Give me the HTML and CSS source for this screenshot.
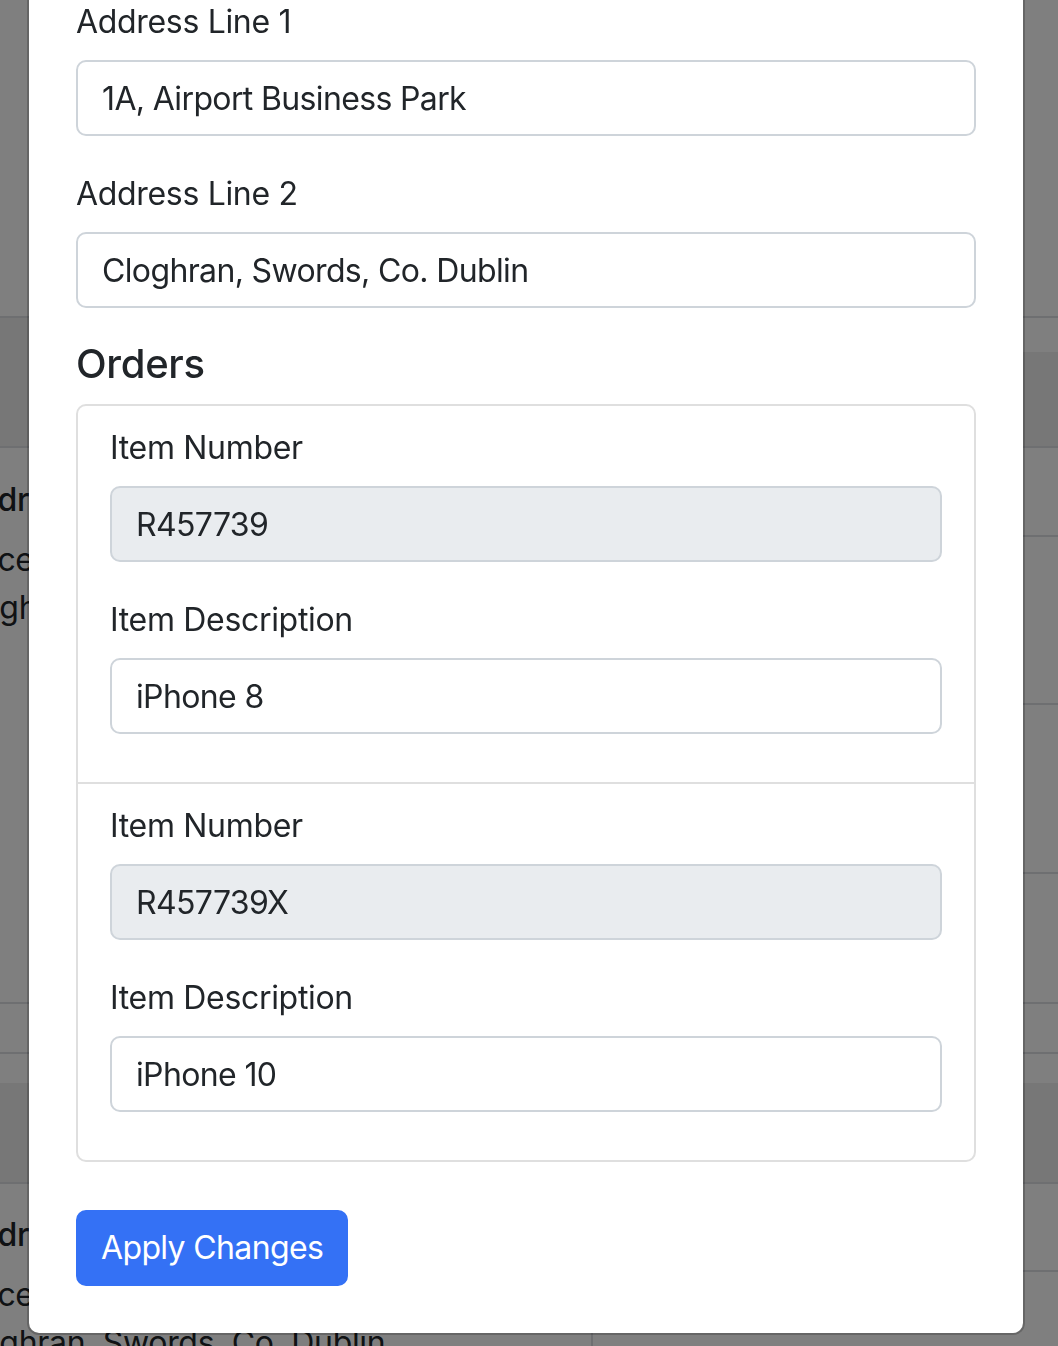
FILE: index.html
```html
<!DOCTYPE html>
<html lang="en">
<head>
<meta charset="utf-8">
<title>Edit Customer</title>
<link rel="stylesheet" href="styles.css">
</head>
<body>
<div class="page">
  <div class="row row-a"><div class="cell"></div><div class="cell cell-r"></div></div>
  <div class="row row-b">
    <div class="cell band"></div>
    <div class="cell cell-r"><div class="sub sub-b1"></div><div class="sub sub-b2 band"></div></div>
  </div>
  <div class="row row-c">
    <div class="cell text-cell">
      <div class="t-line t-head t-address">Address</div>
      <div class="t-line t-office">Office 1A, Airport Business Park</div>
      <div class="t-line t-town">Cloghran, Swords, Co. Dublin</div>
    </div>
    <div class="cell cell-r">
      <div class="sub sub-c1"></div>
      <div class="sub sub-c2"></div>
      <div class="sub sub-c3"></div>
      <div class="sub sub-c4"></div>
    </div>
  </div>
  <div class="row row-d"><div class="cell"></div><div class="cell cell-r"></div></div>
  <div class="row row-e">
    <div class="cell"><div class="sub sub-e1"></div><div class="sub sub-e2 band"></div></div>
    <div class="cell cell-r"><div class="sub sub-e1"></div><div class="sub sub-e2 band"></div></div>
  </div>
  <div class="row row-f">
    <div class="cell text-cell text-cell-f">
      <div class="t-line t-head t-address">Address</div>
      <div class="t-line t-office">Office 1A, Airport Business Park</div>
      <div class="t-line t-town">Cloghran, Swords, Co. Dublin</div>
    </div>
    <div class="cell cell-r"><div class="sub sub-f1"></div></div>
  </div>
</div>

<div class="backdrop"></div>

<div class="modal-wrap">
  <div class="modal">
    <div class="field">
      <label class="label" for="a1">Address Line 1</label>
      <input class="input" id="a1" type="text" value="1A, Airport Business Park">
    </div>
    <div class="field">
      <label class="label" for="a2">Address Line 2</label>
      <input class="input" id="a2" type="text" value="Cloghran, Swords, Co. Dublin">
    </div>
    <h4 class="section-title">Orders</h4>
    <ul class="orders">
      <li class="order">
        <div class="field">
          <label class="label" for="n1">Item Number</label>
          <input class="input input-readonly" id="n1" type="text" value="R457739" readonly>
        </div>
        <div class="field">
          <label class="label" for="d1">Item Description</label>
          <input class="input" id="d1" type="text" value="iPhone 8">
        </div>
      </li>
      <li class="order">
        <div class="field">
          <label class="label" for="n2">Item Number</label>
          <input class="input input-readonly" id="n2" type="text" value="R457739X" readonly>
        </div>
        <div class="field">
          <label class="label" for="d2">Item Description</label>
          <input class="input" id="d2" type="text" value="iPhone 10">
        </div>
      </li>
    </ul>
    <button class="btn-primary" type="button">Apply Changes</button>
  </div>
</div>
</body>
</html>
```

FILE: styles.css
```css
* {
  box-sizing: border-box;
}

html, body {
  margin: 0;
  padding: 0;
  height: 1346px;
  overflow: hidden;
}

body {
  font-family: Inter, "Liberation Sans", sans-serif;
  letter-spacing: -0.02em;
  color: #212529;
  background: #ffffff;
}

/* ---------- background page (under the backdrop) ---------- */
.page {
  width: 1058px;
}

.row {
  display: grid;
  grid-template-columns: 591px 1fr;
  border-bottom: 2px solid #dcdfe3;
}

.cell {
  display: flex;
  flex-direction: column;
}

.cell-r {
  border-left: 2px solid #dcdfe3;
}

.band {
  background: #eeeeee;
}

.row-a { height: 318px; }
.row-b { height: 130px; }
.sub-b1 { height: 34px; }
.sub-b2 { flex: 1; }

.row-c { height: 556px; }
.sub-c1 { height: 89px; border-bottom: 2px solid #dcdfe3; }
.sub-c2 { height: 168px; border-bottom: 2px solid #dcdfe3; }
.sub-c3 { height: 169px; border-bottom: 2px solid #dcdfe3; }
.sub-c4 { flex: 1; }

.row-d { height: 50px; }
.row-e { height: 130px; }
.sub-e1 { height: 29px; }
.sub-e2 { flex: 1; }

.row-f { height: 200px; border-bottom: 0; }
.sub-f1 { height: 88px; border-bottom: 2px solid #dcdfe3; }

.text-cell {
  padding-top: 28px;
  font-size: 32px;
  line-height: 48px;
  white-space: nowrap;
  overflow: hidden;
}

.text-cell-f {
  padding-top: 27px;
}

.t-head {
  font-weight: 500;
  margin-bottom: 12px;
}

.t-address { text-indent: -44px; }
.t-office { text-indent: -56px; }
.t-town { text-indent: -50px; }

/* ---------- backdrop and modal ---------- */
.backdrop {
  position: fixed;
  inset: 0;
  background: rgba(0, 0, 0, 0.5);
}

.modal-wrap {
  position: fixed;
  inset: 0;
  display: flex;
  align-items: flex-end;
  justify-content: flex-start;
  padding: 0 0 11px 27px;
  overflow: hidden;
}

.modal {
  width: 998px;
  flex-shrink: 0;
  background: #ffffff;
  background-clip: padding-box;
  border: 2px solid rgba(0, 0, 0, 0.2);
  border-radius: 12px;
  padding: 47px;
  display: flex;
  flex-direction: column;
}

.field {
  display: flex;
  flex-direction: column;
  margin-bottom: 32px;
}

.label {
  font-size: 32px;
  line-height: 48px;
  padding-top: 2px;
  margin-bottom: 14px;
  color: #212529;
}

.input {
  font: inherit;
  font-size: 32px;
  line-height: 48px;
  letter-spacing: -0.02em;
  height: 76px;
  padding: 12px 24px;
  border: 2px solid #ced4da;
  border-radius: 10px;
  color: #212529;
  background: #ffffff;
  outline: none;
  width: 100%;
}

.input-readonly {
  background: #e9ecef;
}

.section-title {
  margin: 0 0 16px;
  font-size: 40px;
  line-height: 48px;
  font-weight: 500;
  color: #212529;
}

.orders {
  list-style: none;
  margin: 0 0 48px;
  padding: 0;
  border: 2px solid #dfdfdf;
  border-radius: 10px;
}

.order {
  padding: 16px 32px;
}

.order + .order {
  border-top: 2px solid #dfdfdf;
}

.btn-primary {
  align-self: flex-start;
  font: inherit;
  font-size: 32px;
  line-height: 48px;
  letter-spacing: -0.02em;
  padding: 12px 23px;
  border: 2px solid #3471f5;
  border-radius: 10px;
  background: #3471f5;
  color: #ffffff;
  cursor: pointer;
}
```
